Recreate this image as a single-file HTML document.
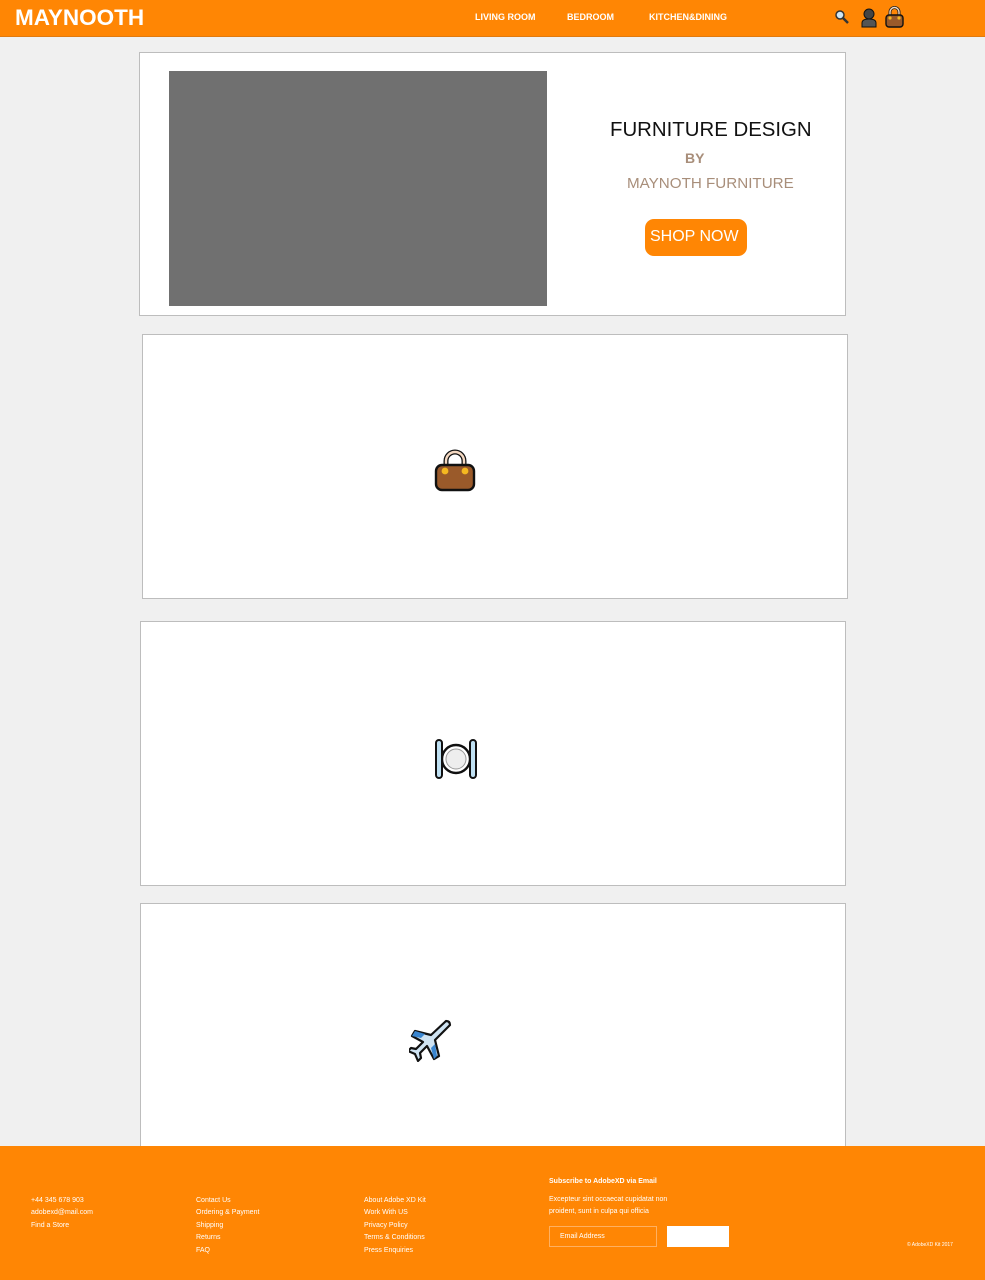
<!DOCTYPE html>
<html><head><meta charset="utf-8"><style>
*{margin:0;padding:0;box-sizing:border-box}
body{width:985px;height:1280px;background:#f0f0f0;font-family:"Liberation Sans",sans-serif;position:relative;overflow:hidden}
.hdr{position:absolute;left:0;top:0;width:985px;height:37px;background:#ff8604;border-bottom:1px solid #e07a10}
.logo{position:absolute;left:15px;top:5px;color:#fff;font-weight:bold;font-size:22.5px}
.nav{position:absolute;top:12px;color:#fff;font-weight:bold;font-size:9px}
.card{position:absolute;background:#fff;border:1px solid #bdbdbd}
.ft{position:absolute;left:0;top:1146px;width:985px;height:134px;background:#ff8604;color:#fff;font-size:7px}
.ft div{position:absolute;line-height:12.4px}
.ico{position:absolute}
</style></head><body>
<div class="hdr">
<div class="logo">MAYNOOTH</div>
<div class="nav" style="left:475px">LIVING ROOM</div>
<div class="nav" style="left:567px">BEDROOM</div>
<div class="nav" style="left:649px">KITCHEN&amp;DINING</div>
<svg class="ico" style="left:834px;top:9px" width="16" height="16" viewBox="0 0 16 16"><circle cx="6" cy="6" r="4" fill="#cfe6f5" stroke="#333" stroke-width="1.5"/><path d="M9 9l5 5" stroke="#333" stroke-width="2.5"/></svg>
<svg class="ico" style="left:860px;top:7px" width="18" height="21" viewBox="0 0 18 21"><circle cx="9" cy="7" r="5" fill="#444" stroke="#111"/><path d="M2 20v-4q0-4 7-4t7 4v4z" fill="#555" stroke="#111"/></svg>
<svg class="ico" style="left:884px;top:6px" width="21" height="22" viewBox="0 0 21 22"><path d="M6 10V6a4.5 4.5 0 0 1 9 0v4" fill="none" stroke="#222" stroke-width="3"/><path d="M6 10V6a4.5 4.5 0 0 1 9 0v4" fill="none" stroke="#f3d8c0" stroke-width="1.4"/><rect x="2" y="9" width="17" height="12" rx="3" fill="#9a5a2a" stroke="#111" stroke-width="1.4"/><circle cx="6" cy="12" r="1.6" fill="#f5b820"/><circle cx="15" cy="12" r="1.6" fill="#f5b820"/></svg>
</div>

<div class="card" style="left:139px;top:52px;width:707px;height:264px">
<div style="position:absolute;left:29px;top:18px;width:378px;height:235px;background:#707070"></div>
<div style="position:absolute;left:470px;top:66px;font-size:20.4px;color:#111">FURNITURE DESIGN</div>
<div style="position:absolute;left:545px;top:97px;font-size:14px;font-weight:bold;color:#a88e7a">BY</div>
<div style="position:absolute;left:487px;top:122px;font-size:15.2px;color:#a88e7a">MAYNOTH FURNITURE</div>
<div style="position:absolute;left:505px;top:166px;width:102px;height:37px;background:#ff8604;border-radius:9px;color:#fff;font-size:16px;padding:9px 0 0 5px">SHOP NOW</div>
</div>

<div class="card" style="left:142px;top:334px;width:706px;height:265px">
<svg class="ico" style="left:290px;top:114px" width="44" height="44" viewBox="0 0 44 44"><path d="M13 20V12a9 9 0 0 1 18 0v8" fill="none" stroke="#111" stroke-width="5"/><path d="M13 20V12a9 9 0 0 1 18 0v8" fill="none" stroke="#f5d9c2" stroke-width="2.4"/><rect x="3" y="16" width="38" height="25" rx="6" fill="#9a5a2a" stroke="#111" stroke-width="2.4"/><circle cx="12" cy="22" r="3.4" fill="#f5b820"/><circle cx="32" cy="22" r="3.4" fill="#f5b820"/></svg>
</div>

<div class="card" style="left:140px;top:621px;width:706px;height:265px">
<svg class="ico" style="left:293px;top:115px" width="44" height="44" viewBox="0 0 44 44"><circle cx="22" cy="22" r="14" fill="#fff" stroke="#111" stroke-width="2.4"/><circle cx="22" cy="22" r="10" fill="#eee" stroke="#999"/><rect x="2" y="3" width="6" height="38" rx="3" fill="#bfe0f2" stroke="#111" stroke-width="2"/><rect x="36" y="3" width="6" height="38" rx="3" fill="#bfe0f2" stroke="#111" stroke-width="2"/></svg>
</div>

<div class="card" style="left:140px;top:903px;width:706px;height:260px">
<svg class="ico" style="left:268px;top:114px" width="44" height="44" viewBox="0 0 44 44"><path d="M37 3q4 0 4 4L26 22l4 16-5 3-7-13-7 7 1 5-3 3-3-7-7-3 3-3 5 1 7-7L3 18l3-5 16 4z" fill="#cfe3f2" stroke="#111" stroke-width="2.2" stroke-linejoin="round"/><path d="M3 18l3-5 10 3-4 4zM25 41l3-3-2-12-4 4z" fill="#3a86d0"/></svg>
</div>

<div class="ft">
<div style="left:549px;top:30px;font-weight:bold">Subscribe to AdobeXD via Email</div>
<div style="left:31px;top:49px">+44 345 678 903<br>adobexd@mail.com<br>Find a Store</div>
<div style="left:196px;top:49px">Contact Us<br>Ordering &amp; Payment<br>Shipping<br>Returns<br>FAQ</div>
<div style="left:364px;top:49px">About Adobe XD Kit<br>Work With US<br>Privacy Policy<br>Terms &amp; Conditions<br>Press Enquiries</div>
<div style="left:549px;top:48px">Excepteur sint occaecat cupidatat non<br>proident, sunt in culpa qui officia</div>
<div style="left:549px;top:80px;width:108px;height:21px;border:1px solid #ffb060;padding:4px 0 0 10px">Email Address</div>
<div style="left:667px;top:80px;width:62px;height:21px;background:#fff"></div>
<div style="left:907px;top:93px;font-size:5px">© AdobeXD Kit 2017</div>
</div>
</body></html>
